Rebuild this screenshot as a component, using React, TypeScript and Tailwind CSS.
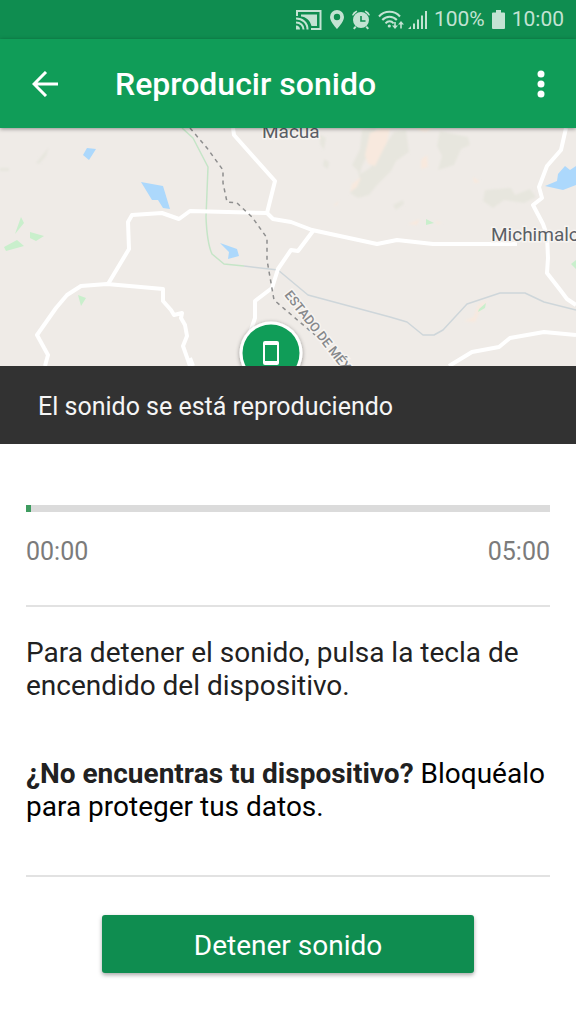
import { useState } from 'react';

const DURATION = 300;

const formatTime = (seconds: number): string => {
  const mm = String(Math.floor(seconds / 60)).padStart(2, '0');
  const ss = String(Math.floor(seconds % 60)).padStart(2, '0');
  return `${mm}:${ss}`;
};

function CastIcon() {
  return (
    <svg viewBox="0 0 26 20" className="h-5 w-[26px]" fill="none" stroke="currentColor" strokeWidth="2">
      <path d="M1 6V1h23.500v18H15" />
      <path d="M5 4.500h16v11.500h-5.500C14 10 10 7 5 6.500z" fill="currentColor" stroke="none" />
      <path d="M0 8.500c6.500 0 11.500 4.500 11.500 11M0 12.500c4.500 0 7.500 3 7.500 7" />
      <path d="M0 15.500c2.500 0 4 1.700 4 4H0z" fill="currentColor" stroke="none" />
    </svg>
  );
}

function PinIcon() {
  return (
    <svg viewBox="0 0 14 19" className="h-[19px] w-3.5" fill="currentColor">
      <path fillRule="evenodd" d="M7 0a7 7 0 0 0-7 7c0 4.800 7 12 7 12s7-7.200 7-12a7 7 0 0 0-7-7zm0 3.800a3.200 3.200 0 1 1 0 6.400 3.200 3.200 0 0 1 0-6.400z" />
    </svg>
  );
}

function AlarmIcon() {
  return (
    <svg viewBox="0 0 18 20" className="h-5 w-[18px]" fill="currentColor">
      <path fillRule="evenodd" d="M9 2a8 8 0 1 0 0 16 8 8 0 0 0 0-16zM8.200 6h1.600v4.200h3.700v1.600H8.200z" />
      <path d="M0 5A7 7 0 0 1 4.500.500l.8 1L1 5.800zM18 5A7 7 0 0 0 13.500.500l-.8 1L17 5.800zM3 16l1.500 1.300-2 2.200L1 18.300zM15 16l-1.500 1.300 2 2.200 1.500-1.200z" />
    </svg>
  );
}

function WifiIcon() {
  return (
    <svg viewBox="0 0 26 20" className="h-5 w-[26px]" fill="none" stroke="currentColor" strokeWidth="2">
      <path d="M1 6.500c5.500-6.300 15.500-6.300 21 0M4.300 10c4-4.500 10.500-4.500 14.500 0M7.500 13.300c2.500-2.800 5.700-2.800 8.200 0" />
      <circle cx="11.300" cy="16" r="1.600" fill="currentColor" stroke="none" />
      <path d="M17 12v6M23 18.500v-6" strokeWidth="1.600" />
      <path d="M14 15.500h6L17 19zM20 14.500h6L23 11z" fill="currentColor" stroke="none" />
    </svg>
  );
}

function SignalIcon() {
  return (
    <svg viewBox="0 0 19 20" className="h-5 w-[19px]" fill="currentColor">
      <path d="M0 19l3-3v3zM5 13.500h2V19H5zM9 9.500h2V19H9zM13 5.500h2V19h-2zM17 1h2v18h-2z" />
    </svg>
  );
}

function BatteryIcon() {
  return (
    <svg viewBox="0 0 13 20" className="h-5 w-[13px]" fill="currentColor">
      <path d="M4 0h5v2.500h3q1 0 1 1V18q0 1-1 1H1q-1 0-1-1V3.500q0-1 1-1h3z" />
    </svg>
  );
}

function StatusBar() {
  return (
    <div className="flex h-[39px] items-center justify-end bg-[#0f8d50] pr-3 text-[21px] leading-none text-[#c3e3d3]">
      <div className="flex items-center gap-2">
        <CastIcon />
        <PinIcon />
        <AlarmIcon />
        <WifiIcon />
      </div>
      <div className="ml-1 flex items-center gap-[7px]">
        <SignalIcon />
        <span>100%</span>
        <BatteryIcon />
        <span>10:00</span>
      </div>
    </div>
  );
}

function AppBar() {
  return (
    <header className="relative z-10 flex h-[89px] items-center bg-[#109d58] pr-[19px] pl-[25px] text-white shadow-[0_1px_4px_rgba(0,0,0,0.4)]">
      <button type="button" aria-label="Atrás" className="flex h-10 w-10 items-center justify-center">
        <svg viewBox="0 0 26 26" className="h-[26px] w-[26px]" fill="none" stroke="currentColor" strokeWidth="3">
          <path d="M26 13H2M14 1L2 13l12 12" />
        </svg>
      </button>
      <h1 className="ml-[50px] flex-1 text-[32px] leading-10 font-medium">Reproducir sonido</h1>
      <button type="button" aria-label="Más opciones" className="flex h-10 w-8 items-center justify-center">
        <svg viewBox="0 0 8 28" className="h-7 w-2" fill="currentColor">
          <circle cx="4" cy="4" r="3.500" />
          <circle cx="4" cy="14" r="3.500" />
          <circle cx="4" cy="24" r="3.500" />
        </svg>
      </button>
    </header>
  );
}

function DeviceMap() {
  return (
    <svg
      viewBox="0 0 576 238"
      preserveAspectRatio="xMidYMid slice"
      role="img"
      aria-label="Mapa del dispositivo"
      className="block h-[238px] w-full bg-[#efebe7]"
    >
      <defs>
        <filter id="soft">
          <feGaussianBlur stdDeviation="1" />
        </filter>
        <filter id="pinShadow" x="-20%" y="-20%" width="140%" height="140%">
          <feDropShadow dx="0" dy="1" stdDeviation="2" floodOpacity="0.4" />
        </filter>
      </defs>

      {/* terrain */}
      <g filter="url(#soft)">
        <g fill="#e7e6de">
          <path d="M49 19L36 35l3 1 7-8zM0 40h9v3H0zM320 6l6 4-2 12-4-6zM324 31l5 3-1 7-5-3z" />
          <path d="M362 2l14-2-6 22-8 16-2 8 10-6 12-18 12-18 12-2 3 22-13 9-5 10-14 14-8 10-11 3-8-5 10-12-2-10-6-6 8-16z" />
          <path d="M440 3l28 6 2 8-9 4-7 16-16 5 4-14-5-10zM485 62l26-2 4 7 15-6 6 8-12 6-20-3-11 8-10-7zM393 77l10-5 1 4-8 6z" />
        </g>
        <g fill="#f8e9de">
          <path d="M370 5l12-5h8l-3 14-7 14-5 10-7-2-3-9zM361 49l-4 10-7 5 2-8zM333 78l6-5-2 4zM421 32l6-5 1 12-7 2zM473 49l7 5-6 1zM408 96l12-5-3 6zM436 93l6 2-6 1zM464 193l10-4 4-12 10-5-8 10-5 12zM415 0h18l-8 4z" />
        </g>
      </g>
      <g fill="#c9efcc">
        <path d="M21 89l3 6-9 11zM30 104l14 4-8 5-6-3zM17 112l7 6-18 5-2-4zM78 167l8 3-5 8zM426 91l8 4-8 2zM479 181l7-6-1 5-7 4zM571 136l5-4v9z" />
      </g>
      <g fill="#acd8fc">
        <path d="M87 20l9 1-7 11-6-5zM141 54l22 4 7 23-7-1-5-8h-6zM220 115l17 6 2 7-11 3 1-7z" />
        <path d="M545 58l12-5 1-7 7-8 5 4 6-4v19l-13 5z" />
      </g>

      {/* waterways */}
      <g fill="none" strokeLinejoin="round" strokeWidth="1.500">
        <path d="M182 0l11 10 15 29-2 50q1 26 6 37l12 10 20 2" stroke="#c5e5c7" />
        <path d="M244 138l34 4 30 25 82 22 17 5 16 13h11l9-5 24-26 33-11h25l19 9 32 8" stroke="#ced6da" />
      </g>

      {/* roads */}
      <g fill="none" stroke="#fff" strokeWidth="4" strokeLinejoin="round">
        <path d="M45 238l3-11-11-20 19-27 11-13 14-9 26-2 56 5v12l8 9 3 5 8-2-1 5 4 7 2 11-4 10 7 20" />
        <path d="M108 156l21-35-1-27 4-7 30-2 17 6 11-8 77 2 6 6 18 3 21 8 65 14 20-4 36 4h84" />
        <path d="M233 0l1 7 41 46-8 32M313 103l-15 20-7-1-13 19-6 19-17 13v17l-6 18M190 230l3 8" />
        <path d="M566 0l-5 22-14 16-8 21 3 11-9 7 10 19 4 11 1 23-1 15 14 18 6 8 9 6" />
        <path d="M449 238l23-14 27-5 11-9 34-6 32 3" />
      </g>
      <path
        d="M190 0l17 20 16 22v13l4 19 10 1 15 14 15 21v22l7 40 41 35"
        fill="none"
        stroke="#8e8e8e"
        strokeWidth="1.500"
        strokeDasharray="4 4"
      />

      {/* labels */}
      <g fill="#5b5f66" stroke="#f7f4f1" strokeWidth="3" paintOrder="stroke" fontSize="19">
        <text x="262" y="10">Macua</text>
        <text x="491" y="113">Michimalo</text>
        <text fontSize="13" fontWeight="500" fill="#86888b" transform="translate(284 167) rotate(52)">ESTADO DE MÉXICO</text>
      </g>

      {/* device marker */}
      <circle cx="271" cy="225" r="31.500" fill="#fff" filter="url(#pinShadow)" />
      <circle cx="271" cy="225" r="28.500" fill="#109d58" />
      <rect x="263" y="213" width="16" height="24" rx="2" fill="#fff" />
      <rect x="265" y="217" width="12" height="16" fill="#109d58" />
    </svg>
  );
}

export default function App() {
  const [isPlaying, setIsPlaying] = useState(true);
  const [elapsed] = useState(0);

  return (
    <div className="min-h-screen bg-white font-[Roboto,'Noto_Sans',sans-serif] text-[#212121]">
      <StatusBar />
      <AppBar />
      <DeviceMap />

      <div role="status" className="flex h-[78px] items-center bg-[#323232] px-[38px] pt-1 text-[25px] text-[#f5f5f5]">
        {isPlaying ? 'El sonido se está reproduciendo' : 'Sonido detenido'}
      </div>

      <main className="px-[26px] pt-[61px] pb-12">
        <progress
          aria-label="Progreso del sonido"
          max={DURATION}
          value={elapsed + 3}
          className="block h-[7px] w-full appearance-none [&::-webkit-progress-bar]:bg-[#dbdbdb] [&::-webkit-progress-value]:bg-[#3f9c60]"
        />
        <div className="mt-6 flex justify-between text-[25px] leading-8 text-[#7b7b7b]">
          <span>{formatTime(elapsed)}</span>
          <span>{formatTime(DURATION)}</span>
        </div>

        <hr className="mt-[37px] border-t-2 border-[#e2e2e2]" />

        <p className="mt-[29px] text-[28px] leading-[33px]">
          Para detener el sonido, pulsa la tecla de encendido del dispositivo.
        </p>
        <p className="mt-[55px] text-[28px] leading-[33px] text-black">
          <strong className="font-bold text-[#212121]">¿No encuentras tu dispositivo?</strong> Bloquéalo para proteger tus datos.
        </p>

        <hr className="mt-[52px] border-t-2 border-[#e2e2e2]" />

        <div className="mt-[38px] flex justify-center">
          <button
            type="button"
            onClick={() => setIsPlaying(false)}
            className="h-[58px] w-[71%] rounded-[3px] bg-[#0f8d50] pt-1 text-[28px] text-white shadow-[0_2px_4px_rgba(0,0,0,0.35)]"
          >
            Detener sonido
          </button>
        </div>
      </main>
    </div>
  );
}
